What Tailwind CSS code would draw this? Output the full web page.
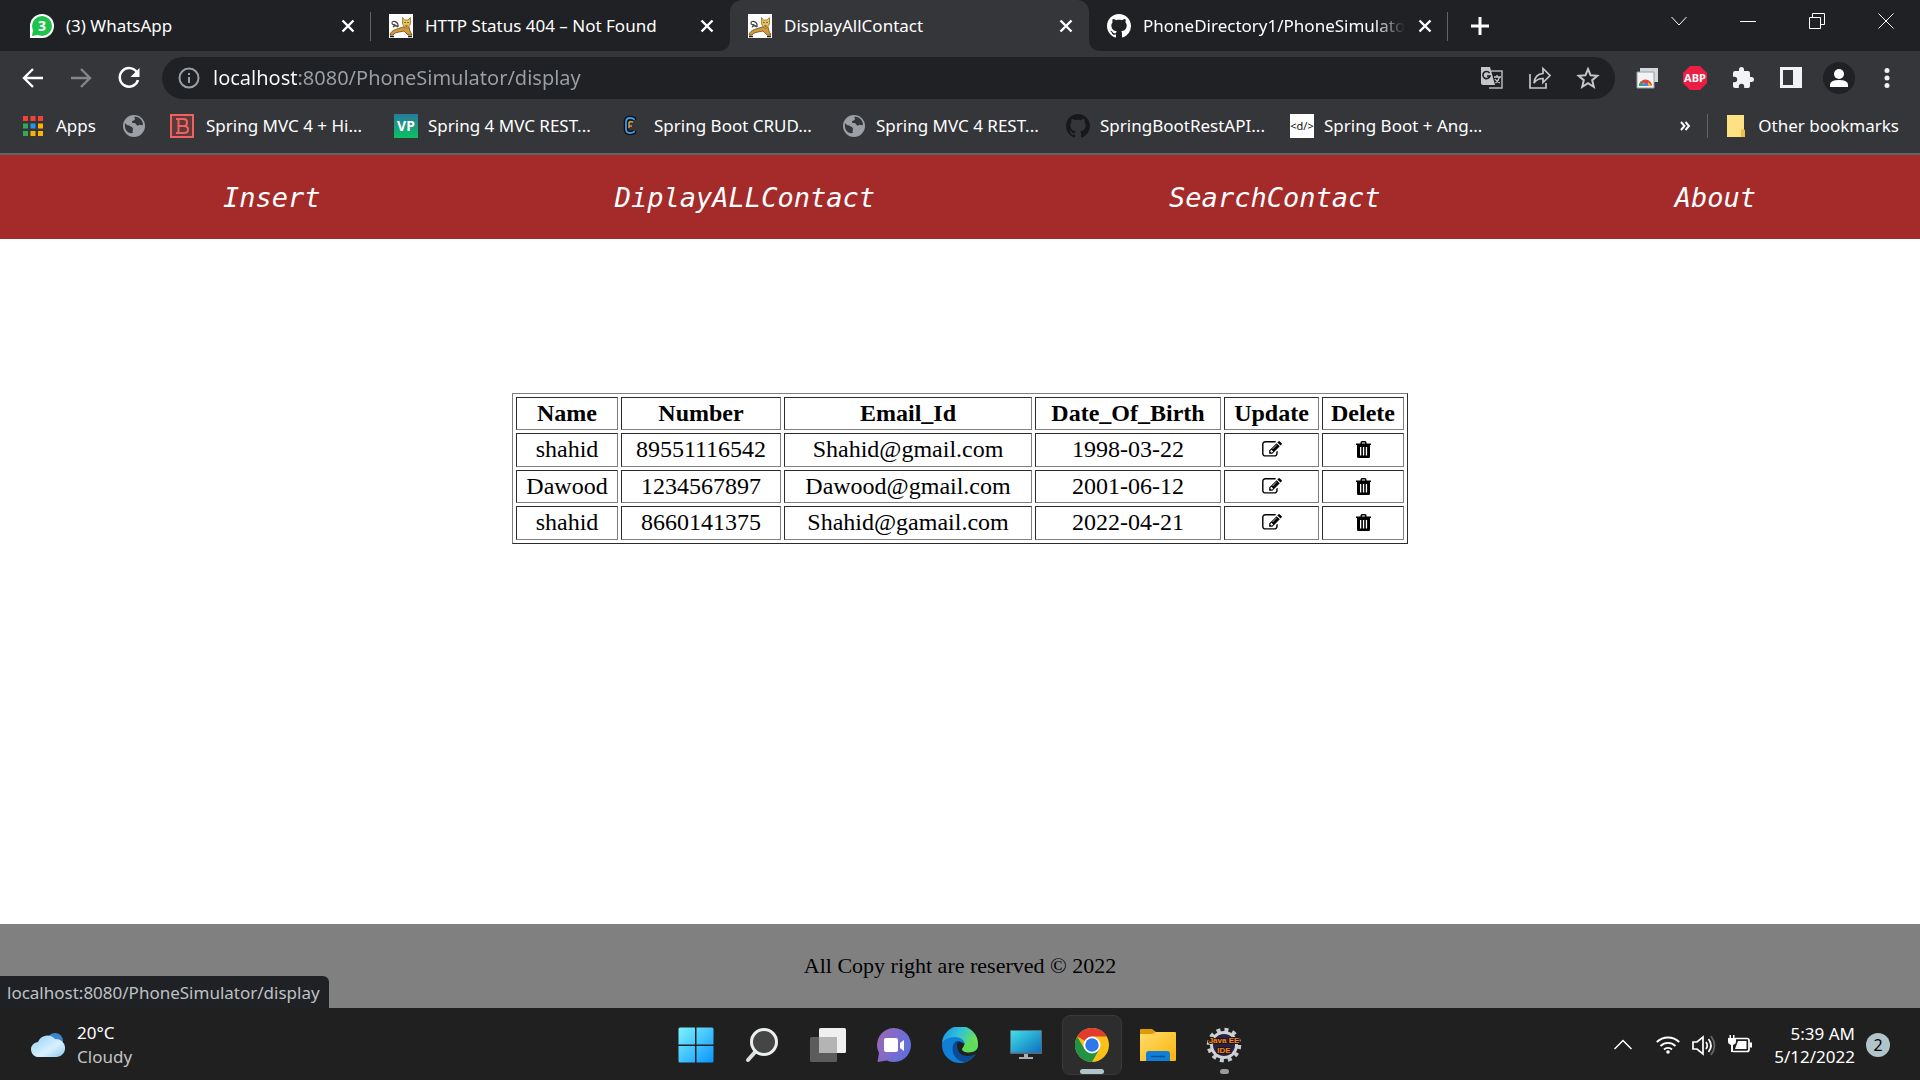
<!DOCTYPE html>
<html lang="en">
<head>
<meta charset="utf-8">
<title>DisplayAllContact</title>
<script src="https://cdn.jsdelivr.net/npm/@tailwindcss/browser@4"></script>
</head>
<body class="flex min-h-screen flex-col bg-white font-['Noto_Sans',sans-serif] text-black">

<!-- Shared icons -->
<svg class="hidden" aria-hidden="true">
  <symbol id="close" viewBox="0 0 24 24"><path d="M6.500 6.500l11 11M17.500 6.500l-11 11" stroke="currentColor" stroke-width="2.400" fill="none"/></symbol>
  <symbol id="tomcat" viewBox="0 0 24 24">
    <rect width="24" height="24" fill="#fff"/>
    <path d="M9 13C10 7 3 6 3 9c0 2 3 2 3 1M4 13c2-2 4-1 5 0" fill="none" stroke="#444" stroke-width="1.200"/>
    <path d="M1 21c1-4 4-5 7-6l6-2h6l1 4 2 4h-4l-4-4-5 1-4 1-2 2z" fill="#d29a3a" stroke="#6b4a16" stroke-width=".8"/>
    <path d="M13.500 3.500l2 2.500h3.500l2.500-2.500v6.500l-2.500 4h-3l-2.500-4z" fill="#e8c05c" stroke="#8a6420" stroke-width=".7"/>
    <path d="M15.500 8.500h1M18.500 8.500h1M16.500 12h2" stroke="#222" stroke-width="1" fill="none"/>
    <path d="M1 22.500h4M19 22.500h4" stroke="#222" stroke-width="1.500"/>
  </symbol>
  <symbol id="github" viewBox="0 0 16 16"><path fill="currentColor" d="M8 0C3.580 0 0 3.580 0 8c0 3.540 2.290 6.530 5.470 7.590.4.070.55-.17.55-.38 0-.19-.01-.82-.01-1.490-2.010.37-2.530-.49-2.690-.94-.09-.23-.48-.94-.82-1.130-.28-.15-.68-.52-.01-.53.63-.01 1.080.58 1.230.82.72 1.210 1.870.87 2.330.66.07-.52.28-.87.51-1.070-1.780-.2-3.640-.89-3.640-3.950 0-.87.31-1.590.82-2.150-.08-.2-.36-1.020.08-2.120 0 0 .67-.21 2.200.82.64-.18 1.320-.27 2-.27s1.360.09 2 .27c1.530-1.040 2.200-.82 2.200-.82.44 1.100.16 1.920.08 2.120.51.56.82 1.270.82 2.150 0 3.070-1.870 3.750-3.650 3.950.29.25.54.73.54 1.480 0 1.070-.01 1.930-.01 2.200 0 .21.15.46.55.38A8.010 8.010 0 0 0 16 8c0-4.420-3.580-8-8-8z"/></symbol>
  <symbol id="globe" viewBox="0 0 24 24"><circle cx="12" cy="12" r="11" fill="#9aa0a6"/><path d="M3 9c2 3 4 2 5 3s3 1 3 3-1 2 0 4c-5 1-9-3-8-10zM12 3c4-1 8 2 9 7-1 3-3 0-4 1s-2 1-3-1-4 0-4-2 3-1 3-3-1-1-1-2z" fill="#35363a"/></symbol>
  <symbol id="edit" viewBox="0 0 1792 1536"><path d="M888 1056l116-116-152-152-116 116v56h96v96h56zm440-720q-16-16-33 1L945 687q-17 17-1 33t33-1l350-350q17-17 1-33zm80 594v190q0 119-84.500 203.500T1120 1408H288q-119 0-203.500-84.500T0 1120V288Q0 169 84.500 84.500T288 0h832q63 0 117 25 15 7 18 23 3 17-9 29l-49 49q-14 14-32 8-23-6-45-6H288q-66 0-113 47t-47 113v832q0 66 47 113t113 47h832q66 0 113-47t47-113V994q0-13 9-22l64-64q15-15 35-7t20 29zm-96-738l288 288-672 672H640V864zm444 132l-92 92-288-288 92-92q28-28 68-28t68 28l152 152q28 28 28 68t-28 68z"/></symbol>
  <symbol id="trash" viewBox="0 0 15 17"><path fill-rule="evenodd" d="M4.500 2.500V1.500Q4.500 0 6 0h3q1.500 0 1.500 1.500v1H15V4h-1v11.500q0 1.500-1.500 1.500h-10Q1 17 1 15.500V4H0V2.500zM6 2.500h3v-1H6zM4 6v8.500h1.300V6zm2.900 0v8.500h1.300V6zm2.900 0v8.500h1.300V6z"/></symbol>
</svg>

<header class="bg-[#35363a] text-[17px] text-white">
  <!-- Tab strip -->
  <div class="flex h-[51px] bg-[#202124] pl-3">
    <div class="relative flex w-[359px] items-center pl-[18px] pr-[11px]">
      <svg class="size-6 shrink-0" viewBox="0 0 24 24"><path d="M0 24V12a12 12 0 1 1 12 12z" fill="#fff"/><circle cx="12" cy="12" r="10" fill="#1fc24a"/><path d="M2 22l1-6 5 5z" fill="#1fc24a"/><text x="12" y="17" text-anchor="middle" font-size="14" font-weight="700" fill="#fff">3</text></svg>
      <span class="ml-3 flex-1 whitespace-nowrap">(3) WhatsApp</span>
      <button aria-label="Close tab" class="size-6"><svg class="size-6"><use href="#close"/></svg></button>
      <span class="absolute right-0 top-3 h-[29px] w-px bg-[#5f6368]"></span>
    </div>
    <div class="flex w-[359px] items-center pl-[18px] pr-[11px]">
      <svg class="size-6 shrink-0"><use href="#tomcat"/></svg>
      <span class="ml-3 flex-1 whitespace-nowrap">HTTP Status 404 – Not Found</span>
      <button aria-label="Close tab" class="size-6"><svg class="size-6"><use href="#close"/></svg></button>
    </div>
    <div class="relative flex w-[359px] items-center rounded-t-xl bg-[#35363a] pl-[18px] pr-[11px]">
      <svg class="absolute -left-3 bottom-0 size-3" viewBox="0 0 12 12"><path d="M12 0v12H0Q12 12 12 0" fill="#35363a"/></svg>
      <svg class="absolute -right-3 bottom-0 size-3" viewBox="0 0 12 12"><path d="M0 0v12h12Q0 12 0 0" fill="#35363a"/></svg>
      <svg class="size-6 shrink-0"><use href="#tomcat"/></svg>
      <span class="ml-3 flex-1 whitespace-nowrap">DisplayAllContact</span>
      <button aria-label="Close tab" class="size-6"><svg class="size-6"><use href="#close"/></svg></button>
    </div>
    <div class="relative flex w-[359px] items-center pl-[18px] pr-[11px]">
      <svg class="size-6 shrink-0"><use href="#github"/></svg>
      <span class="ml-3 mr-2 w-0 flex-1 overflow-hidden whitespace-nowrap [mask-image:linear-gradient(90deg,#000_88%,transparent)]">PhoneDirectory1/PhoneSimulator</span>
      <button aria-label="Close tab" class="size-6"><svg class="size-6"><use href="#close"/></svg></button>
      <span class="absolute right-0 top-3 h-[29px] w-px bg-[#5f6368]"></span>
    </div>
    <button aria-label="New tab" class="ml-5 w-6"><svg class="size-6" viewBox="0 0 24 24"><path d="M12 3v18M3 12h18" stroke="#fff" stroke-width="3"/></svg></button>
    <div class="ml-auto flex h-[42px]">
      <button aria-label="Search tabs" class="flex w-[69px] items-center justify-center"><svg class="size-4" viewBox="0 0 16 16"><path d="M.5 4L8 12l7.500-8" fill="none" stroke="#fff"/></svg></button>
      <button aria-label="Minimize" class="flex w-[69px] items-center justify-center"><svg class="size-4" viewBox="0 0 16 16"><path d="M0 8.500h16" stroke="#fff"/></svg></button>
      <button aria-label="Restore" class="flex w-[69px] items-center justify-center"><svg class="size-4" viewBox="0 0 16 16"><path d="M.5 4.500h11v11H.5zM3.500 4.500V.5h12v11h-4" fill="none" stroke="#fff"/></svg></button>
      <button aria-label="Close window" class="flex w-[69px] items-center justify-center"><svg class="size-4" viewBox="0 0 16 16"><path d="M.5.5l15 15M15.500.5l-15 15" stroke="#fff"/></svg></button>
    </div>
  </div>

  <!-- Toolbar -->
  <div class="flex h-[54px] items-center pl-[21px] pr-[21px]">
    <div class="flex gap-6">
      <button aria-label="Back" class="size-6"><svg viewBox="0 0 24 24" fill="none" stroke="#fff" stroke-width="2.400"><path d="M22 12H3.500M12 3l-9 9 9 9"/></svg></button>
      <button aria-label="Forward" class="size-6"><svg viewBox="0 0 24 24" fill="none" stroke="#85868a" stroke-width="2.400"><path d="M2 12h18.500M12 3l9 9-9 9"/></svg></button>
      <button aria-label="Reload" class="size-6"><svg viewBox="0 0 24 24"><path d="M20 6.500A9.300 9.300 0 1 0 21 14" fill="none" stroke="#fff" stroke-width="2.500"/><path d="M22.500 2v9h-9z" fill="#fff"/></svg></button>
    </div>
    <div class="ml-[21px] flex h-[42px] flex-1 items-center rounded-full bg-[#202124] pl-4 pr-[15px]">
      <svg class="size-[22px]" viewBox="0 0 22 22"><circle cx="11" cy="11" r="9.500" fill="none" stroke="#9aa0a6" stroke-width="2"/><path d="M11 10v6M11 6v2" stroke="#9aa0a6" stroke-width="2"/></svg>
      <input aria-label="Address" type="text" value="localhost:8080/PhoneSimulator/display" class="ml-[13px] w-0 flex-1 bg-[linear-gradient(90deg,#fff_86px,#9aa0a6_86px)] bg-clip-text text-[20px] text-transparent outline-none">
      <div class="flex gap-6">
        <button aria-label="Translate" class="size-6"><svg viewBox="0 0 24 24"><path d="M11 5h11v17H9" fill="none" stroke="#b5b7ba" stroke-width="1.500"/><path d="M1 1h9l5 18H3q-2 0-2-2z" fill="#c4c6c9"/><path d="M9.500 7A3.600 3.600 0 1 0 10 10H7" fill="none" stroke="#202124" stroke-width="1.600"/><path d="M14 11h7M17 9v2M19.500 11q-1 4-4 6M15 13q2 3 5 4" fill="none" stroke="#c4c6c9" stroke-width="1.300"/></svg></button>
        <button aria-label="Share" class="size-6"><svg viewBox="0 0 24 24" fill="none" stroke="#c4c6c9" stroke-width="1.700"><path d="M2 8v14h16v-5M6 17q1-9 9-9.500V2.500l7 7-7 7v-4q-6 0-9 4.500z"/></svg></button>
        <button aria-label="Bookmark this page" class="size-6"><svg viewBox="0 0 24 24" fill="none" stroke="#c4c6c9" stroke-width="2"><path d="M12 3l2.600 6.300 6.700.5-5.100 4.400 1.600 6.600L12 17.200l-5.800 3.600 1.600-6.600-5.100-4.400 6.700-.5z"/></svg></button>
      </div>
    </div>
    <div class="ml-5 flex items-center gap-6">
      <button aria-label="Chrome extension" class="size-6"><svg viewBox="0 0 24 24"><path d="M5 2h18v14H5z" fill="#d5d7da"/><path d="M2 6h17v16H2z" fill="#f1f3f4" stroke="#9aa0a6"/><path d="M4 20a6.500 6.500 0 0 1 13 0h-4l-4-3z" fill="#ea4335"/><path d="M4 20a7 7 0 0 1 2-5l4 5z" fill="#34a853"/><path d="M13 16l4 4h-4z" fill="#fbbc04"/><path d="M7.500 20a3 3 0 0 1 6 0z" fill="#4285f4"/></svg></button>
      <button aria-label="Adblock Plus" class="size-6"><svg viewBox="0 0 24 24"><path d="M7 0h10l7 7v10l-7 7H7l-7-7V7z" fill="#ed1e45"/><text x="12" y="16" text-anchor="middle" font-size="11" font-weight="700" fill="#fff">ABP</text></svg></button>
      <button aria-label="Extensions" class="size-6"><svg viewBox="0 0 24 24"><path fill="#f1f3f4" d="M20.500 11H19V7a2 2 0 0 0-2-2h-4V3.500a2.500 2.500 0 0 0-5 0V5H4a2 2 0 0 0-2 2v3.800h1.500a2.700 2.700 0 0 1 0 5.400H2V20a2 2 0 0 0 2 2h3.800v-1.500a2.700 2.700 0 0 1 5.400 0V22H17a2 2 0 0 0 2-2v-4h1.500a2.500 2.500 0 0 0 0-5z"/></svg></button>
      <button aria-label="Side panel" class="size-6"><svg viewBox="0 0 24 24"><path fill="#f1f3f4" fill-rule="evenodd" d="M1 1h22v21H1zM4 4v15h10V4z"/></svg></button>
      <button aria-label="Profile" class="-mx-1 size-8 rounded-full bg-[#202124]"><svg viewBox="0 0 32 32" fill="#fff"><circle cx="16" cy="12" r="5"/><path d="M7 25v-2q0-5 9-5t9 5v2z"/></svg></button>
      <button aria-label="Menu" class="size-6"><svg viewBox="0 0 24 24" fill="#f1f3f4"><circle cx="12" cy="4.500" r="2.500"/><circle cx="12" cy="12" r="2.500"/><circle cx="12" cy="19.500" r="2.500"/></svg></button>
    </div>
  </div>

  <!-- Bookmarks bar -->
  <nav aria-label="Bookmarks" class="flex h-[50px] items-center whitespace-nowrap border-b-2 border-[#5f6368] pb-[7px] pl-[22px] pr-[21px]">
    <a href="#" class="flex w-[100px] items-center gap-3">
      <svg class="size-[22px]" viewBox="0 0 22 22"><path d="M1 1h5v5H1zM8.500 1h5v5h-5zM16 1h5v5h-5z" fill="#f44336"/><path d="M1 8.500h5v5H1zM1 16h5v5H1z" fill="#34a853"/><path d="M8.500 8.500h5v5h-5z" fill="#2196f3"/><path d="M16 8.500h5v5h-5zM8.500 16h5v5h-5zM16 16h5v5h-5z" fill="#ffb300"/></svg>Apps</a>
    <a href="#" aria-label="Bookmark" class="w-12"><svg class="size-6"><use href="#globe"/></svg></a>
    <a href="#" class="flex w-56 items-center gap-3"><svg class="size-6" viewBox="0 0 24 24"><rect x="1" y="1" width="22" height="22" fill="#5c3a3c" stroke="#f0625f" stroke-width="2"/><path d="M6 5h8q3 0 3 3.500T14 12q4 0 4 3.500T14 19H6M8.500 5v14M8.500 12H14" fill="none" stroke="#f0625f" stroke-width="2"/></svg>Spring MVC 4 + Hi...</a>
    <a href="#" class="flex w-56 items-center gap-[10px]"><svg class="size-6" viewBox="0 0 24 24"><defs><linearGradient id="vp" x2="0" y2="1"><stop stop-color="#2a7a9c"/><stop offset="1" stop-color="#0cbf62"/></linearGradient></defs><rect width="24" height="24" fill="url(#vp)"/><text x="12" y="17" text-anchor="middle" font-size="14" font-weight="700" fill="#fff">VP</text></svg>Spring 4 MVC REST...</a>
    <a href="#" class="flex w-56 items-center gap-3"><svg class="size-6" viewBox="0 0 24 24"><path d="M16 6V5q-2-1-4-1-4 0-4 4v7q0 4 4 4 2 0 4-1v-1" fill="none" stroke="#0c1016" stroke-width="4.500"/><path d="M16 6V5q-2-1-4-1-4 0-4 4v7q0 4 4 4 2 0 4-1v-1" fill="none" stroke="#3f9be0" stroke-width="1.800"/><path d="M11 14V9q0-2 4-1M11 12h3" fill="none" stroke="#d99545" stroke-width="1.500"/></svg>Spring Boot CRUD...</a>
    <a href="#" class="flex w-56 items-center gap-[10px]"><svg class="size-6"><use href="#globe"/></svg>Spring MVC 4 REST...</a>
    <a href="#" class="flex w-56 items-center gap-[10px]"><svg class="size-6 text-[#17181b]"><use href="#github"/></svg>SpringBootRestAPI...</a>
    <a href="#" class="flex w-56 items-center gap-[10px]"><svg class="size-6" viewBox="0 0 24 24"><rect width="24" height="24" fill="#fff"/><text x="12" y="16" text-anchor="middle" font-size="11" fill="#111">&lt;d/&gt;</text></svg>Spring Boot + Ang...</a>
    <button aria-label="More bookmarks" class="ml-auto"><svg class="size-3" viewBox="0 0 12 12"><path d="M2 2l3.500 4L2 10M6.500 2L10 6l-3.500 4" fill="none" stroke="#fff" stroke-width="1.900"/></svg></button>
    <span class="ml-4 h-6 w-px bg-[#5f6368]"></span>
    <a href="#" class="ml-[18px] flex items-center gap-3"><svg class="w-5" viewBox="0 0 20 22"><path d="M1 0h17v15l1 1v6H1z" fill="#ffe183"/><path d="M15 16q0-2 2-2t2 2v6h-4z" fill="#e9c04e"/></svg>Other bookmarks</a>
  </nav>
</header>

<!-- Site navigation -->
<nav aria-label="Site" class="flex h-[84px] items-center justify-around bg-[#a52a2a] pl-[76px] pr-[17px] pt-[2px] font-['DejaVu_Sans_Mono',monospace] text-[27px] italic text-white">
  <a href="#">Insert</a>
  <a href="#">DiplayALLContact</a>
  <a href="#">SearchContact</a>
  <a href="#">About</a>
</nav>

<main class="flex-1 pt-[154px]">
  <table class="mx-auto w-[896px] table-fixed border-separate border-spacing-[3px] border border-b-[#2c2c2c] border-l-[#808080] border-r-[#2c2c2c] border-t-[#808080] text-center font-['Liberation_Serif',serif] text-[24px] leading-[31px] [&_a]:flex [&_a]:h-[31px] [&_a]:items-center [&_a]:justify-center [&_td]:border [&_td]:border-b-[#808080] [&_td]:border-l-[#2c2c2c] [&_td]:border-r-[#808080] [&_td]:border-t-[#2c2c2c] [&_td]:align-top [&_th]:border [&_th]:border-b-[#808080] [&_th]:border-l-[#2c2c2c] [&_th]:border-r-[#808080] [&_th]:border-t-[#2c2c2c]">
    <colgroup><col class="w-[102px]"><col class="w-[160px]"><col class="w-[248px]"><col class="w-[186px]"><col class="w-[95px]"><col class="w-[82px]"></colgroup>
    <thead>
      <tr class="h-[33px]"><th>Name</th><th>Number</th><th>Email_Id</th><th>Date_Of_Birth</th><th>Update</th><th>Delete</th></tr>
    </thead>
    <tbody>
      <tr class="h-[34px]"><td>shahid</td><td>89551116542</td><td>Shahid@gmail.com</td><td>1998-03-22</td>
        <td><a href="#" aria-label="Update"><svg class="h-[17px] w-5"><use href="#edit"/></svg></a></td>
        <td><a href="#" aria-label="Delete"><svg class="h-[17px] w-[15px]"><use href="#trash"/></svg></a></td></tr>
      <tr class="h-[33px]"><td>Dawood</td><td>1234567897</td><td>Dawood@gmail.com</td><td>2001-06-12</td>
        <td><a href="#" aria-label="Update"><svg class="h-[17px] w-5"><use href="#edit"/></svg></a></td>
        <td><a href="#" aria-label="Delete"><svg class="h-[17px] w-[15px]"><use href="#trash"/></svg></a></td></tr>
      <tr class="h-[34px]"><td>shahid</td><td>8660141375</td><td>Shahid@gamail.com</td><td>2022-04-21</td>
        <td><a href="#" aria-label="Update"><svg class="h-[17px] w-5"><use href="#edit"/></svg></a></td>
        <td><a href="#" aria-label="Delete"><svg class="h-[17px] w-[15px]"><use href="#trash"/></svg></a></td></tr>
    </tbody>
  </table>
</main>

<footer class="relative flex h-[84px] items-center justify-center bg-[#808080] pb-[2px] font-['Liberation_Serif',serif] text-[22px]">
  <p>All Copy right are reserved © 2022</p>
  <!-- Link status bubble -->
  <div class="absolute bottom-0 left-0 flex h-8 w-[329px] items-center rounded-tr-md bg-[#202124] pl-[7px] pt-px font-['Noto_Sans',sans-serif] text-[17px] text-[#bdc1c6]">localhost:8080/PhoneSimulator/display</div>
</footer>

<!-- Taskbar -->
<div class="grid h-[72px] grid-cols-[1fr_auto_1fr] items-center bg-[#202020] pt-px text-[17px] leading-6 text-white">
  <button class="flex items-center gap-3 justify-self-start pl-[31px] text-left">
    <svg class="w-[34px]" viewBox="0 0 34 26"><defs><linearGradient id="cl" x2="1" y2="1"><stop stop-color="#8fd0fa"/><stop offset=".6" stop-color="#d9f0fd"/><stop offset="1" stop-color="#8cc8ee"/></linearGradient></defs><circle cx="24" cy="9" r="8" fill="#3d86cf"/><path d="M8 25a7.500 7.500 0 0 1-1-15A10 10 0 0 1 24 7a9 9 0 0 1 2 18z" fill="url(#cl)"/></svg>
    <span class="block">20°C<span class="block text-[#c4c4c4]">Cloudy</span></span>
  </button>

  <div class="flex gap-[6px] [&>button]:flex [&>button]:size-[60px] [&>button]:items-center [&>button]:justify-center">
    <button aria-label="Start"><svg class="size-9" viewBox="0 0 36 36"><defs><linearGradient id="win" x2="1" y2="1"><stop stop-color="#7df5ff"/><stop offset="1" stop-color="#0a94ff"/></linearGradient></defs><path d="M2 .5h15v17H.5V2Q.5.5 2 .5zM18.500.5H34Q35.500.5 35.500 2v15.500h-17zM.5 19H17v16.500H2Q.5 35.500.5 34zM18.500 19h17v15q0 1.500-1.500 1.500H18.500z" fill="url(#win)"/></svg></button>
    <button aria-label="Search"><svg class="size-9" viewBox="0 0 36 36"><path d="M12 24l-8 9" stroke="#dcdfe0" stroke-width="4" stroke-linecap="round"/><circle cx="20" cy="15" r="12.500" fill="#454545" stroke="#ecefef" stroke-width="3"/></svg></button>
    <button aria-label="Task view"><svg class="size-9" viewBox="0 0 36 36"><rect x="9" y="1" width="27" height="25" rx="1.500" fill="#f0f0f0"/><rect y="10" width="27" height="25" rx="1.500" fill="#5c5c5c"/><path d="M9 10h18v16H9z" fill="#b4b4b4"/></svg></button>
    <button aria-label="Chat"><svg class="size-9" viewBox="0 0 36 36"><defs><linearGradient id="ch" x1="0" y1=".3" x2="1" y2=".7"><stop stop-color="#9a68b8"/><stop offset="1" stop-color="#5b6fe0"/></linearGradient></defs><path d="M18 1a17 17 0 1 1-7 32.500L1.500 35 3 26A17 17 0 0 1 18 1z" fill="url(#ch)"/><rect x="8" y="11" width="14" height="14" rx="2" fill="#fff"/><path d="M24 16l4-3v11l-4-3z" fill="#fff"/></svg></button>
    <button aria-label="Edge"><svg class="size-9" viewBox="0 0 36 36"><defs><linearGradient id="e1" x2="1" y2=".4"><stop stop-color="#1d8be0"/><stop offset=".5" stop-color="#2fc2dc"/><stop offset="1" stop-color="#6fe24e"/></linearGradient></defs><circle cx="18" cy="18" r="18" fill="#0f7fd8"/><path d="M0 17A18 18 0 0 1 36 17c0 6-4 8-9 8-4 0-6-1-6-3 0-1 2-2 2-4 0-5-5-8-10-8C6 10 1 13 0 17z" fill="url(#e1)"/><path d="M14 14c-7 6-3 20 9 21 5-1 9-5 11-9-6 4-18 3-18-6 0-3 1-5 3-6z" fill="#0c4a94"/><path d="M15 16q5-3 8 2c0 2-2 3-2 4 0 2 3 3 6 3 4 0 7-1 9-4v4l-2 2c-6 3-16 3-18-4-1-2-1-4-1-7z" fill="#202020"/><path d="M22 18c0 2-2 3-2 4 0 2 3 3.500 7 3.500 5 0 9-3 9-8L30 12z" fill="#5fdc5a"/></svg></button>
    <button aria-label="Desktop"><svg class="size-9" viewBox="0 0 36 36"><defs><linearGradient id="mo" x2="1" y2="1"><stop stop-color="#3fe0e6"/><stop offset="1" stop-color="#0f6fc0"/></linearGradient></defs><rect x="2" y="3" width="32" height="24" rx="1" fill="#5b6b75"/><rect x="3" y="4" width="30" height="21.500" fill="url(#mo)"/><path d="M16 27h4v3h5v2H11v-2h5z" fill="#a9b0b5"/></svg></button>
    <button aria-label="Chrome" class="relative rounded-lg border border-[#383838] bg-[#2d2d2d]"><svg class="size-[34px]" viewBox="0 0 48 48"><circle cx="24" cy="24" r="24" fill="#fbc116"/><path d="M3.200 12A24 24 0 0 1 44.800 12H24v12z" fill="#e33b2e"/><path d="M3.200 12A24 24 0 0 0 24 48l10.400-18L24 24l-10.400 6z" fill="#229342"/><circle cx="24" cy="24" r="12" fill="#fff"/><circle cx="24" cy="24" r="9.500" fill="#2f78ec"/></svg><span class="absolute bottom-0 left-[17px] h-[5px] w-6 rounded-full bg-[#b0c4ca]"></span></button>
    <button aria-label="File Explorer"><svg class="size-9" viewBox="0 0 36 36"><defs><linearGradient id="fo" x2="1" y2="1"><stop stop-color="#ffdc6a"/><stop offset="1" stop-color="#fbb40c"/></linearGradient></defs><path d="M0 3q0-1 1-1h11l4 3v5H0z" fill="#e09a08"/><path d="M0 7h12l4-2h19q1 0 1 1v27q0 1-1 1H0z" fill="url(#fo)"/><path d="M6 34v-7q0-3 3-3h18q3 0 3 3v7z" fill="#117fd6"/><path d="M11 29.500h14" stroke="#0b4f94" stroke-width="1.500"/></svg></button>
    <button aria-label="Eclipse Java EE IDE" class="relative"><svg class="size-9" viewBox="0 0 36 36"><circle cx="18" cy="18" r="15" fill="none" stroke="#c9cccf" stroke-width="4.500" stroke-dasharray="3.900 3.954"/><circle cx="18" cy="18" r="12.500" fill="#2a2146" stroke="#cfd2d4" stroke-width="3"/><text font-family="Liberation Sans" x="18" y="16" text-anchor="middle" font-size="8" font-weight="700" fill="#f58a1f" stroke="#221510" stroke-width="2" paint-order="stroke">Java EE</text><text font-family="Liberation Sans" x="18" y="26" text-anchor="middle" font-size="8" font-weight="700" fill="#f58a1f" stroke="#221510" stroke-width="2" paint-order="stroke">IDE</text></svg><span class="absolute bottom-px left-[26px] h-[5px] w-[9px] rounded-full bg-[#9a9a9a]"></span></button>
  </div>

  <div class="flex items-center justify-self-end pr-[30px]">
    <button aria-label="Show hidden icons" class="mr-6"><svg class="size-[18px]" viewBox="0 0 18 18"><path d="M.5 13L9 4.500l8.500 8.500" fill="none" stroke="#fff" stroke-width="1.500"/></svg></button>
    <button aria-label="Network, volume and battery" class="mr-[22px] flex gap-3">
      <svg class="size-6" viewBox="0 0 24 24" fill="none" stroke="#fff" stroke-width="1.900"><path d="M.8 9a16 16 0 0 1 22.400 0M4.500 13a10.600 10.600 0 0 1 15 0M8 16.500a5.700 5.700 0 0 1 8 0"/><circle cx="12" cy="19" r="1.800" fill="#fff" stroke="none"/></svg>
      <svg class="size-6" viewBox="0 0 24 24" fill="none" stroke="#fff" stroke-width="1.700"><path d="M1 9h4l6-5v17l-6-5H1zM14 9q2.500 3.500 0 7M16.500 6q5 6.500 0 13"/><path d="M19 3q7 9.500 0 19" stroke="#666"/></svg>
      <svg class="size-6" viewBox="0 0 24 24"><path d="M7 5.500h12q2 0 2 2v9q0 2-2 2H5" fill="none" stroke="#fff" stroke-width="1.700"/><path d="M10 8h8.500v8H7zM21.500 9.500h2.500v5h-2.500zM0 5h8v4q0 2-3 3v7H3v-7q-3-1-3-3zM1.500 2h1.500v4H1.500zM5 2h1.500v4H5z" fill="#fff"/></svg>
    </button>
    <button class="flex items-center gap-[11px] text-right"><span class="block leading-[23px]">5:39 AM<span class="block">5/12/2022</span></span>
      <span class="flex size-6 items-center justify-center rounded-full bg-[#b0c4ca] text-[16px] text-black">2</span></button>
  </div>
</div>
</body>
</html>
